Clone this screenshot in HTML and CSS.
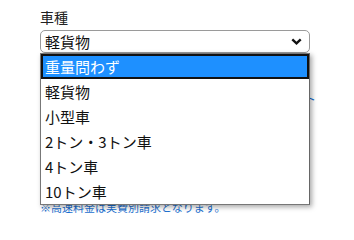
FILE: index.html
```html
<!DOCTYPE html>
<html lang="ja">
<head>
<meta charset="utf-8">
<link rel="stylesheet" href="styles.css">
</head>
<body>
<div class="field">
  <div class="label">車種</div>
  <div class="select">
    <span class="value">軽貨物</span>
    <svg class="chev" width="11" height="7" viewBox="0 0 11 7"><path d="M1.3 1.3 L5.5 5.3 L9.7 1.3" fill="none" stroke="#111" stroke-width="2.4"/></svg>
    <div class="list">
      <div class="opt active">重量問わず</div>
      <div class="opt">軽貨物</div>
      <div class="opt">小型車</div>
      <div class="opt">2トン・3トン車</div>
      <div class="opt">4トン車</div>
      <div class="opt">10トン車</div>
    </div>
  </div>
  <div class="hidden-note">料金表はこちらのリスト</div>
  <div class="note">※高速料金は実費別請求となります。</div>
</div>
</body>
</html>
```
FILE: styles.css
```css
html, body {
  margin: 0;
  padding: 0;
  background: #fff;
  font-family: "Noto Sans CJK JP", "Noto Sans", sans-serif;
}
.field {
  padding: 7px 0 0 40px;
  width: 270px;
}
.label {
  font-size: 14px;
  line-height: 20px;
  color: #222;
  margin-bottom: 3px;
}
.select {
  position: relative;
  box-sizing: border-box;
  height: 23px;
  border: 1px solid #9a9a9a;
  border-radius: 5px;
  background: #fff;
  display: flex;
  align-items: center;
  justify-content: space-between;
  padding: 0 7px 0 4px;
}
.value {
  font-size: 15px;
  line-height: 21px;
  color: #111;
}
.chev {
  display: block;
}
.list {
  position: absolute;
  left: -1px;
  top: 22px;
  width: 270px;
  box-sizing: border-box;
  border: 1px solid #777;
  border-right-color: #666;
  background: #fff;
  box-shadow: 2px 2px 5px rgba(0, 0, 0, 0.35);
  z-index: 2;
}
.opt {
  height: 25px;
  line-height: 25px;
  font-size: 15px;
  color: #111;
  padding-left: 4px;
  box-sizing: border-box;
  white-space: nowrap;
}
.opt.active {
  background: #1e90ff;
  color: #fff;
  border: 2px solid #111;
  line-height: 21px;
  padding-left: 2px;
}
.hidden-note {
  margin-top: 37px;
  width: 276px;
  text-align: right;
  font-size: 12px;
  line-height: 18px;
  color: #1a6fd0;
  white-space: nowrap;
}
.note {
  margin-top: 92px;
  font-size: 11px;
  line-height: 15px;
  color: #1a6fd0;
  white-space: nowrap;
}
```
